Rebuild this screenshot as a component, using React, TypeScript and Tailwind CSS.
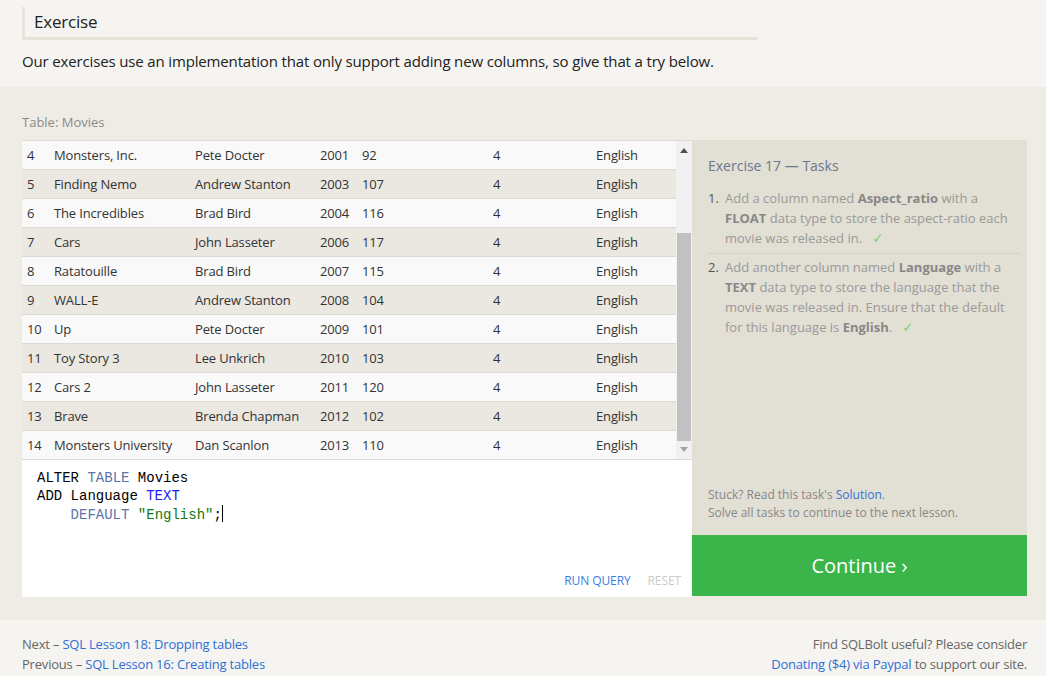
import React from "react";

const rows: [string, string, string, string, string, string, string][] = [
  ["4", "Monsters, Inc.", "Pete Docter", "2001", "92", "4", "English"],
  ["5", "Finding Nemo", "Andrew Stanton", "2003", "107", "4", "English"],
  ["6", "The Incredibles", "Brad Bird", "2004", "116", "4", "English"],
  ["7", "Cars", "John Lasseter", "2006", "117", "4", "English"],
  ["8", "Ratatouille", "Brad Bird", "2007", "115", "4", "English"],
  ["9", "WALL-E", "Andrew Stanton", "2008", "104", "4", "English"],
  ["10", "Up", "Pete Docter", "2009", "101", "4", "English"],
  ["11", "Toy Story 3", "Lee Unkrich", "2010", "103", "4", "English"],
  ["12", "Cars 2", "John Lasseter", "2011", "120", "4", "English"],
  ["13", "Brave", "Brenda Chapman", "2012", "102", "4", "English"],
  ["14", "Monsters University", "Dan Scanlon", "2013", "110", "4", "English"],
];

export default function App() {
  return (
    <div
      className="w-[1046px] h-[676px] overflow-hidden bg-[#f5f4f0] text-[#333]"
      style={{ fontFamily: '"Open Sans", "Noto Sans", sans-serif' }}
    >
      {/* Header */}
      <div className="pt-[7px] px-[22px]">
        <div className="w-[736px] border-l-[3px] border-b-[3px] border-[#e6e4da] pl-[9px] h-[33px] flex items-center">
          <span className="text-[17px] text-[#222] tracking-[-0.2px]">Exercise</span>
        </div>
        <p className="mt-[10px] text-[15px] text-[#222] tracking-[-0.15px] leading-[22px] whitespace-nowrap">
          Our exercises use an implementation that only support adding new columns, so give that a try below.
        </p>
      </div>

      {/* Exercise area */}
      <div className="mt-[15px] bg-[#efece5] h-[533px] px-[22px] pt-[26px]">
        <div className="text-[13px] text-[#8a8a8a] leading-[18px]">Table: Movies</div>
        <div className="mt-[9px] flex">
          {/* Left column: table + editor */}
          <div className="w-[670px] shrink-0 flex flex-col">
            <div className="flex border-t border-[#dddbd4] bg-white">
              <div className="flex-1 flex flex-col">
                {rows.map((r, i) => (
                  <div
                    key={r[0]}
                    className={`flex h-[29px] pt-[2px] items-center border-b border-[#dcdad3] text-[13px] text-[#333] tracking-[-0.15px] ${
                      i % 2 === 0 ? "bg-[#f9f9f9]" : "bg-[#eae8e1]"
                    }`}
                  >
                    <div className="w-[27px] pl-[5px]">{r[0]}</div>
                    <div className="w-[141px] pl-[5px]">{r[1]}</div>
                    <div className="w-[125px] pl-[5px]">{r[2]}</div>
                    <div className="w-[42px] pl-[5px]">{r[3]}</div>
                    <div className="w-[131px] pl-[5px]">{r[4]}</div>
                    <div className="w-[103px] pl-[5px]">{r[5]}</div>
                    <div className="flex-1 pl-[5px]">{r[6]}</div>
                  </div>
                ))}
              </div>
              {/* Scrollbar */}
              <div className="w-[16px] bg-[#f1f1f1] flex flex-col items-center border-b border-[#dcdad3]">
                <div className="h-[17px] flex items-center justify-center pt-[2px]">
                  <svg width="8" height="5" viewBox="0 0 8 5">
                    <path d="M0 5 L4 0 L8 5 Z" fill="#505050" />
                  </svg>
                </div>
                <div className="mt-[75px] w-[14px] h-[208px] bg-[#c1c1c1]" />
                <div className="h-[17px] flex items-center justify-center">
                  <svg width="8" height="5" viewBox="0 0 8 5">
                    <path d="M0 0 L8 0 L4 5 Z" fill="#a3a3a3" />
                  </svg>
                </div>
              </div>
            </div>
            {/* Editor */}
            <div className="bg-white h-[137px] relative">
              <div
                className="pt-[9px] pl-[15px] text-[14px] leading-[18px] text-black whitespace-pre"
                style={{ fontFamily: '"Liberation Mono", "DejaVu Sans Mono", monospace' }}
              >
                <div>
                  ALTER <span className="text-[#5a76a8]">TABLE</span> Movies
                </div>
                <div>
                  ADD Language <span className="text-[#1a1aff]">TEXT</span>
                </div>
                <div>
                  {"    "}
                  <span className="text-[#5a76a8]">DEFAULT</span>{" "}
                  <span className="text-[#117711]">"English"</span>;
                  <span className="inline-block w-px h-[17px] bg-black align-[-3px]" />
                </div>
              </div>
              <div className="absolute right-[11px] bottom-[8px] flex gap-[17px] text-[12px] leading-[16px] tracking-[-0.1px]">
                <span className="text-[#3b7de0]">RUN QUERY</span>
                <span className="text-[#cbcbcb]">RESET</span>
              </div>
            </div>
          </div>

          {/* Right panel */}
          <div className="w-[335px] shrink-0 flex flex-col">
            <div className="bg-[#e2dfd4] h-[395px] flex flex-col pl-[16px] pr-[7px] pt-[16px]">
              <div className="text-[14px] text-[#6b7890] leading-[20px]">Exercise 17 — Tasks</div>
              <ol className="mt-[12px] text-[13px] leading-[20px] text-[#9a9a9a]">
                <li className="flex pb-[5px] border-b border-[#d4d1c6] ml-0">
                  <span className="w-[17px] text-[#555]">1.</span>
                  <span className="flex-1">
                    Add a column named <b className="text-[#888]">Aspect_ratio</b> with a{" "}
                    <b className="text-[#888]">FLOAT</b> data type to store the aspect-ratio each movie was released in.
                    <span className="ml-[10px] text-[14px] text-[#7fcf7f]">✓</span>
                  </span>
                </li>
                <li className="flex pt-[3px]">
                  <span className="w-[17px] text-[#555]">2.</span>
                  <span className="flex-1">
                    Add another column named <b className="text-[#888]">Language</b> with a{" "}
                    <b className="text-[#888]">TEXT</b> data type to store the language that the movie was released
                    in. Ensure that the default for this language is <b className="text-[#888]">English</b>.
                    <span className="ml-[10px] text-[14px] text-[#7fcf7f]">✓</span>
                  </span>
                </li>
              </ol>
              <div className="mt-auto pb-[13px] text-[12px] leading-[18px] text-[#888]">
                <div>
                  Stuck? Read this task's <span className="text-[#3b6fd8]">Solution</span>.
                </div>
                <div>Solve all tasks to continue to the next lesson.</div>
              </div>
            </div>
            <div className="bg-[#3bb54a] h-[61px] flex items-center justify-center text-white text-[20px]">
              Continue ›
            </div>
          </div>
        </div>
      </div>

      {/* Footer */}
      <div className="px-[22px] pt-[14px] flex justify-between text-[13px] leading-[20px] text-[#666] tracking-[-0.2px]">
        <div>
          <div>
            Next – <span className="text-[#2f6fd6]">SQL Lesson 18: Dropping tables</span>
          </div>
          <div>
            Previous – <span className="text-[#2f6fd6]">SQL Lesson 16: Creating tables</span>
          </div>
        </div>
        <div className="text-right mr-[-3px]">
          <div>Find SQLBolt useful? Please consider</div>
          <div>
            <span className="text-[#2f6fd6]">Donating ($4) via Paypal</span> to support our site.
          </div>
        </div>
      </div>
    </div>
  );
}
